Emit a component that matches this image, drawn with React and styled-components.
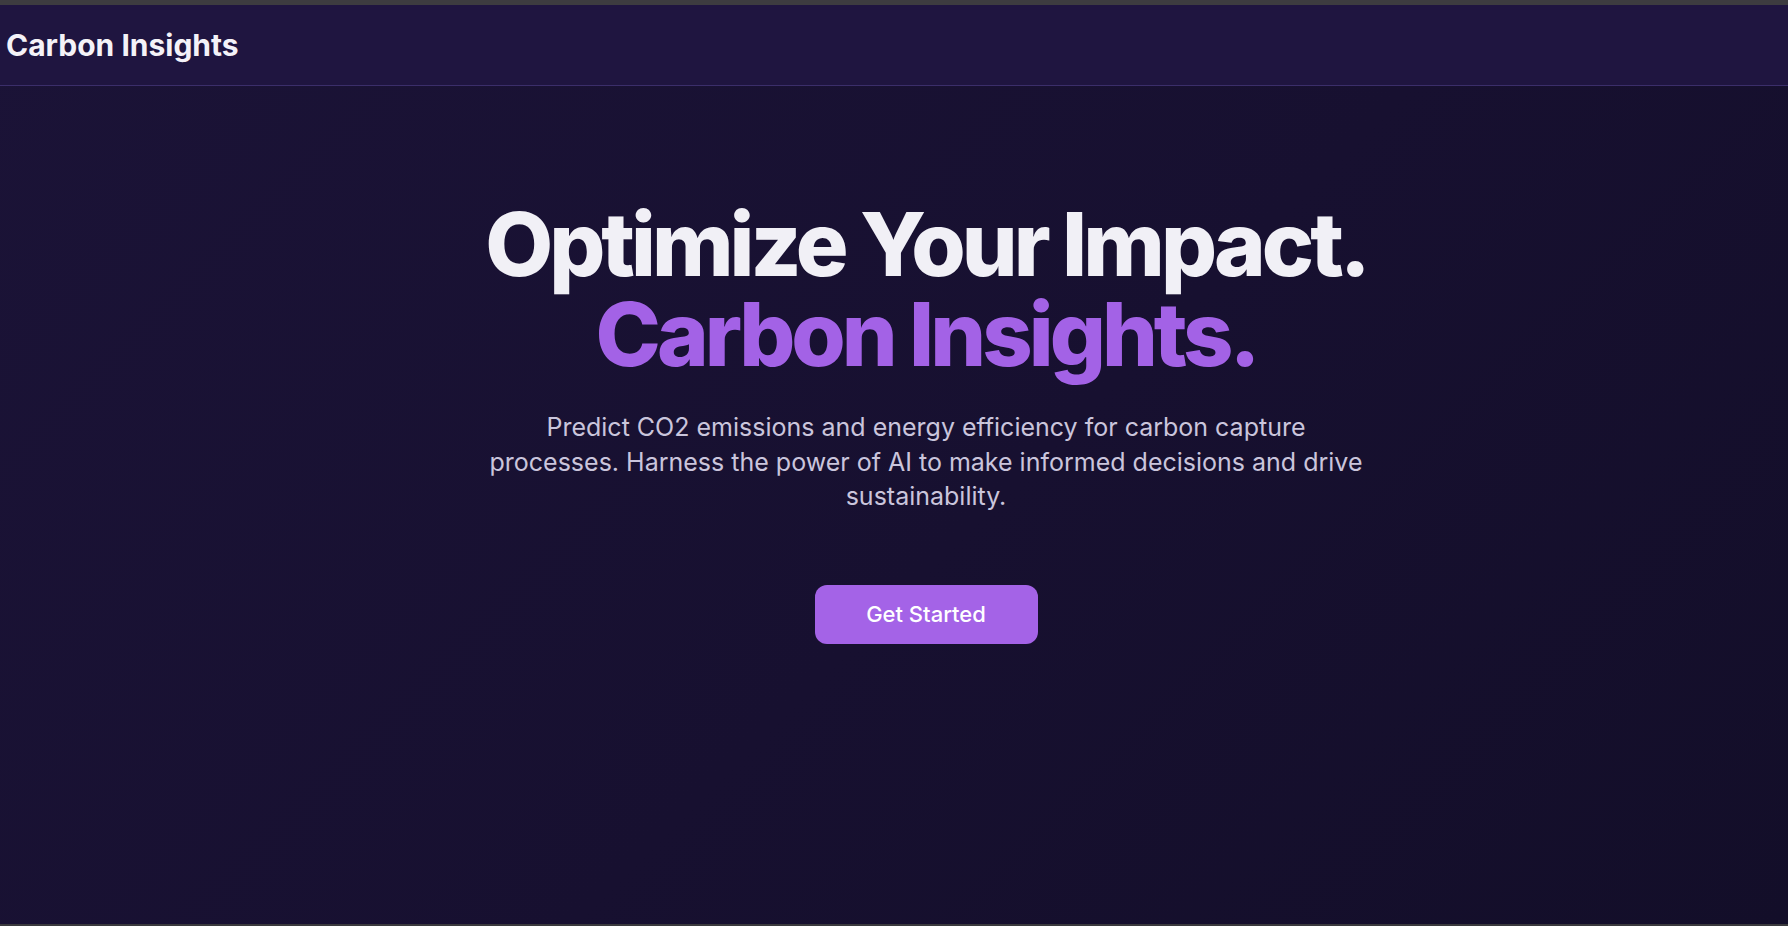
import React from "react";
import styled, { createGlobalStyle } from "styled-components";

const GlobalStyle = createGlobalStyle`
  * {
    box-sizing: border-box;
  }
  html, body {
    margin: 0;
    padding: 0;
    background: #161030;
    font-family: Inter, "Noto Sans", sans-serif;
  }
`;

const Page = styled.div`
  height: 926px;
  display: flex;
  flex-direction: column;
  border-top: 5px solid #3d3c40;
  border-bottom: 2px solid #3a393d;
  background: linear-gradient(135deg, #1b1337 0%, #171030 55%, #130e29 100%);
  overflow: hidden;
`;

const Header = styled.header`
  height: 81px;
  flex-shrink: 0;
  display: flex;
  align-items: center;
  padding: 0 6px;
  background-color: #1f1540;
  border-bottom: 1px solid #3b2e6a;
`;

const Brand = styled.h1`
  margin: 0;
  font-size: 30px;
  font-weight: 700;
  color: #f4f2f8;
`;

const Hero = styled.main`
  flex: 1;
  display: flex;
  flex-direction: column;
  align-items: center;
  padding: 113px 0 0 64px;
  text-align: center;
`;

const Heading = styled.h2`
  margin: 0;
  font-size: 88px;
  line-height: 90px;
  font-weight: 800;
  letter-spacing: -0.045em;
  color: #f1f0f6;
`;

const Accent = styled.span`
  display: block;
  color: #a362e6;
`;

const Lead = styled.p`
  margin: 31px 0 0;
  max-width: 885px;
  font-size: 25px;
  line-height: 34.5px;
  font-weight: 400;
  color: #cac5dc;
`;

const CtaButton = styled.button`
  margin-top: 71px;
  width: 223px;
  height: 59px;
  border: none;
  border-radius: 12px;
  background-color: #a463e7;
  color: #ffffff;
  font-family: Inter, "Noto Sans", sans-serif;
  font-size: 22px;
  font-weight: 500;
  cursor: pointer;
`;

export default function App() {
  return (
    <>
      <GlobalStyle />
      <Page>
        <Header>
          <Brand>Carbon Insights</Brand>
        </Header>
        <Hero>
          <Heading>
            Optimize Your Impact.
            <Accent>Carbon Insights.</Accent>
          </Heading>
          <Lead>
            Predict CO2 emissions and energy efficiency for carbon capture
            processes. Harness the power of AI to make informed decisions and
            drive sustainability.
          </Lead>
          <CtaButton>Get Started</CtaButton>
        </Hero>
      </Page>
    </>
  );
}
